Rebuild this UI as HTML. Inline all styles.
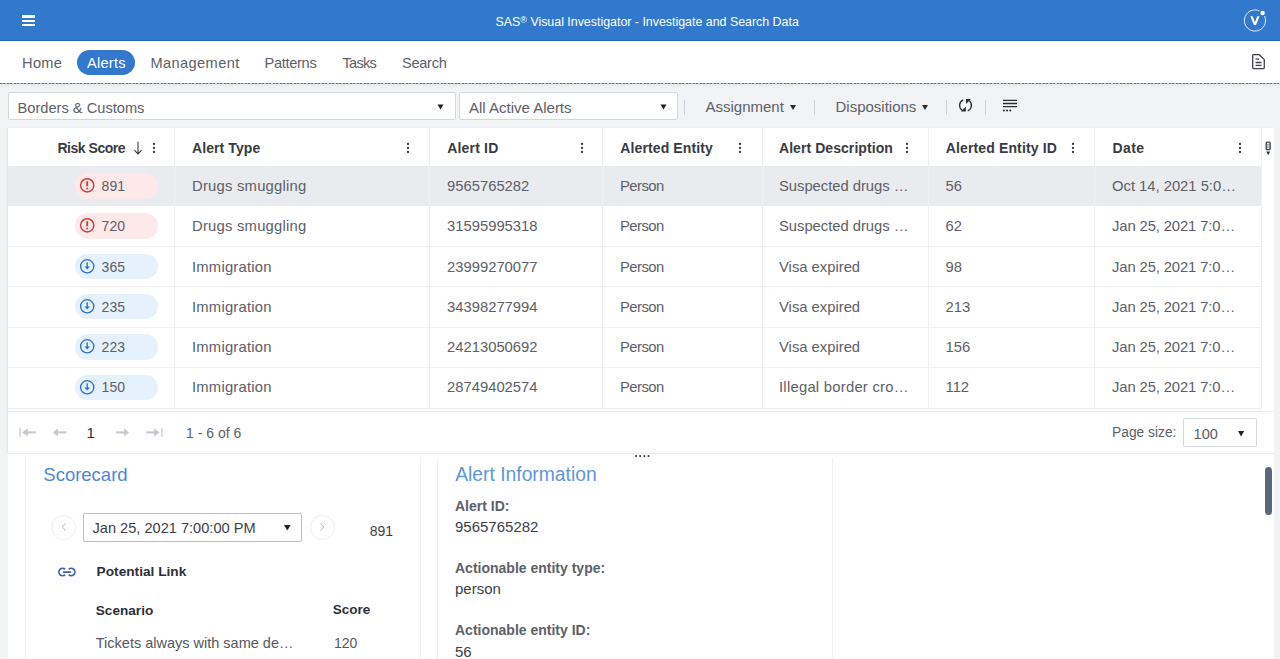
<!DOCTYPE html>
<html><head><meta charset="utf-8">
<style>
*{box-sizing:border-box;margin:0;padding:0}
html,body{width:1280px;height:659px;overflow:hidden;background:#f2f3f5;font-family:"Liberation Sans",sans-serif;color:#5d6066}
.t{position:absolute;white-space:nowrap;line-height:1}
.b{position:absolute}
.s{position:absolute;overflow:visible}
.bold{font-weight:bold}
</style></head><body>
<div class="b" style="left:0;top:0;width:1280px;height:41px;background:#3279ce"></div>
<div class="b" style="left:0;top:40px;width:1280px;height:1.5px;background:#1f66c1"></div>
<div class="b" style="left:22px;top:15.3px;width:13px;height:2.4px;background:#fff"></div>
<div class="b" style="left:22px;top:19.6px;width:13px;height:2.4px;background:#fff"></div>
<div class="b" style="left:22px;top:23.9px;width:13px;height:2.4px;background:#fff"></div>
<div class="t " style="left:495.5px;top:16.00px;font-size:12.4px;color:#fff">SAS<span style="font-size:9px;vertical-align:3px">®</span> Visual Investigator - Investigate and Search Data</div>
<svg class="s" style="left:1240px;top:5px" width="32" height="32" viewBox="0 0 32 32">
<path d="M19.48 5.89 A10.6 10.6 0 1 0 24.61 11.02" fill="none" stroke="#e3ecf8" stroke-width="1"/>
<circle cx="22.6" cy="8" r="2.2" fill="#fff"/>
<path d="M10.3 11.2 H12.7 L14.95 17.2 L17.2 11.2 H19.6 L16.0 19.9 H13.9 Z" fill="#fff"/>
</svg>
<div class="b" style="left:0;top:41px;width:1280px;height:42px;background:#fff"></div>
<div class="b" style="left:0;top:84px;width:1280px;height:5px;background:linear-gradient(rgba(0,0,0,0.045),rgba(0,0,0,0))"></div>
<div class="b" style="left:0;top:83px;width:1280px;height:1px;background:repeating-linear-gradient(90deg,#54779f 0,#54779f 2px,rgba(84,119,170,0.45) 2px,rgba(84,119,170,0.45) 3.5px)"></div>
<div class="b" style="left:77px;top:50px;width:58px;height:25px;border-radius:12.5px;background:#3279ce"></div>
<div class="t " style="left:22px;top:56.00px;font-size:14.6px;letter-spacing:0.352px;color:#5d6066">Home</div>
<div class="t " style="left:87px;top:56.00px;font-size:14.6px;letter-spacing:0.239px;color:#fff">Alerts</div>
<div class="t " style="left:150.5px;top:56.00px;font-size:14.6px;letter-spacing:0.391px;color:#5d6066">Management</div>
<div class="t " style="left:264.5px;top:56.00px;font-size:14.6px;letter-spacing:-0.305px;color:#5d6066">Patterns</div>
<div class="t " style="left:342.5px;top:56.00px;font-size:14.6px;letter-spacing:-0.763px;color:#5d6066">Tasks</div>
<div class="t " style="left:402px;top:56.00px;font-size:14.6px;letter-spacing:-0.299px;color:#5d6066">Search</div>
<svg class="s" style="left:1250px;top:52px" width="18" height="19" viewBox="0 0 18 19">
<path d="M3 2.7 H9.3 L14.3 7.6 V15.6 Q14.3 16.6 13.3 16.6 H3.6 Q2.7 16.6 2.7 15.6 V3.6 Q2.7 2.7 3.6 2.7 Z" fill="none" stroke="#3d4048" stroke-width="1.3" stroke-linejoin="round"/>
<path d="M5.6 7.2 H9 M5.6 10.5 H11.5 M5.6 13.3 H11.5" stroke="#3d4048" stroke-width="1.3"/>
</svg>
<div class="b" style="left:8px;top:92px;width:447.5px;height:28px;background:#fff;border:1px solid #d3d6db;border-radius:2px"></div>
<div class="t " style="left:17.5px;top:101.01px;font-size:14.65px;">Borders &amp; Customs</div>
<svg class="s" style="left:437px;top:104px" width="7" height="6" viewBox="0 0 7 6"><path d="M0.5 0.5 H6.5 L3.5 5.5 Z" fill="#222"/></svg>
<div class="b" style="left:459px;top:92px;width:219px;height:28px;background:#fff;border:1px solid #d3d6db;border-radius:2px"></div>
<div class="t " style="left:469px;top:100.01px;font-size:15px;">All Active Alerts</div>
<svg class="s" style="left:660px;top:104px" width="7" height="6" viewBox="0 0 7 6"><path d="M0.5 0.5 H6.5 L3.5 5.5 Z" fill="#222"/></svg>
<div class="b" style="left:684px;top:100px;width:1px;height:15px;background:#cdd0d5"></div>
<div class="b" style="left:814px;top:100px;width:1px;height:15px;background:#cdd0d5"></div>
<div class="b" style="left:946px;top:100px;width:1px;height:15px;background:#cdd0d5"></div>
<div class="b" style="left:985px;top:100px;width:1px;height:15px;background:#cdd0d5"></div>
<div class="t " style="left:705.5px;top:99.00px;font-size:15px;">Assignment</div>
<svg class="s" style="left:790px;top:105px" width="6" height="5" viewBox="0 0 6 5"><path d="M0 0 H6 L3 5 Z" fill="#2a2c31"/></svg>
<div class="t " style="left:835.5px;top:99.00px;font-size:15px;">Dispositions</div>
<svg class="s" style="left:922px;top:105px" width="6" height="5" viewBox="0 0 6 5"><path d="M0 0 H6 L3 5 Z" fill="#2a2c31"/></svg>
<svg class="s" style="left:954px;top:95px" width="24" height="21" viewBox="0 0 24 21">
<path d="M9.3 4.8 A5.9 5.9 0 0 0 8.1 15.1" fill="none" stroke="#2a2c33" stroke-width="1.3"/>
<path d="M6.8 16.6 H11.8 V11.8 Z" fill="#2a2c33"/>
<path d="M14.9 5.5 A5.9 5.9 0 0 1 13.7 15.8" fill="none" stroke="#2a2c33" stroke-width="1.3"/>
<path d="M12 4 H16.8 L12 8.9 Z" fill="#2a2c33"/>
</svg>
<svg class="s" style="left:1002px;top:98px" width="17" height="15" viewBox="0 0 17 15">
<path d="M1 2.4 H15 M1 5.5 H15 M1 8.7 H15" stroke="#2a2c33" stroke-width="1.3"/>
<circle cx="1.9" cy="12.5" r="1" fill="#2a2c33"/><circle cx="5.1" cy="12.5" r="1" fill="#2a2c33"/><circle cx="8.3" cy="12.5" r="1" fill="#2a2c33"/>
</svg>
<div class="b" style="left:8px;top:128px;width:1266px;height:325px;background:#fff;box-shadow:-1px 0 1.5px rgba(0,0,0,0.07)"></div>
<div class="b" style="left:8px;top:166px;width:1253px;height:40.3px;background:#eaebef"></div>
<div class="b" style="left:8px;top:165.5px;width:1253px;height:1px;background:#e9ebee"></div>
<div class="b" style="left:8px;top:246.10px;width:1253px;height:1px;background:#eef0f2"></div>
<div class="b" style="left:8px;top:286.40px;width:1253px;height:1px;background:#eef0f2"></div>
<div class="b" style="left:8px;top:326.70px;width:1253px;height:1px;background:#eef0f2"></div>
<div class="b" style="left:8px;top:367.00px;width:1253px;height:1px;background:#eef0f2"></div>
<div class="b" style="left:8px;top:408px;width:1253px;height:1px;background:#eaecef"></div>
<div class="b" style="left:174px;top:128px;width:1px;height:280.5px;background:#eef0f2"></div>
<div class="b" style="left:429px;top:128px;width:1px;height:280.5px;background:#eef0f2"></div>
<div class="b" style="left:602px;top:128px;width:1px;height:280.5px;background:#eef0f2"></div>
<div class="b" style="left:762px;top:128px;width:1px;height:280.5px;background:#eef0f2"></div>
<div class="b" style="left:928px;top:128px;width:1px;height:280.5px;background:#eef0f2"></div>
<div class="b" style="left:1094px;top:128px;width:1px;height:280.5px;background:#eef0f2"></div>
<div class="b" style="left:1261px;top:128px;width:1px;height:280.5px;background:#eef0f2"></div>
<div class="t bold" style="left:57.5px;top:141.00px;font-size:14px;letter-spacing:-0.487px;color:#383b42">Risk Score</div>
<svg class="s" style="left:133px;top:140px" width="10" height="16" viewBox="0 0 10 16"><path d="M5 1.8 V14 M1.4 10.2 L5 14 L8.6 10.2" fill="none" stroke="#383b42" stroke-width="1.1"/></svg>
<svg class="s" style="left:150.6px;top:141.3px" width="6" height="14" viewBox="0 0 6 14"><circle cx="3" cy="3" r="1.15" fill="#3a3c42"/><circle cx="3" cy="7" r="1.15" fill="#3a3c42"/><circle cx="3" cy="11" r="1.15" fill="#3a3c42"/></svg>
<div class="t bold" style="left:192px;top:141.01px;font-size:14px;letter-spacing:0.088px;color:#383b42">Alert Type</div>
<svg class="s" style="left:405.1px;top:141.3px" width="6" height="14" viewBox="0 0 6 14"><circle cx="3" cy="3" r="1.15" fill="#3a3c42"/><circle cx="3" cy="7" r="1.15" fill="#3a3c42"/><circle cx="3" cy="11" r="1.15" fill="#3a3c42"/></svg>
<div class="t bold" style="left:447.2px;top:141.01px;font-size:14px;letter-spacing:0.185px;color:#383b42">Alert ID</div>
<svg class="s" style="left:578.7px;top:141.3px" width="6" height="14" viewBox="0 0 6 14"><circle cx="3" cy="3" r="1.15" fill="#3a3c42"/><circle cx="3" cy="7" r="1.15" fill="#3a3c42"/><circle cx="3" cy="11" r="1.15" fill="#3a3c42"/></svg>
<div class="t bold" style="left:620.3px;top:141.01px;font-size:14px;letter-spacing:0.115px;color:#383b42">Alerted Entity</div>
<svg class="s" style="left:737.3px;top:141.3px" width="6" height="14" viewBox="0 0 6 14"><circle cx="3" cy="3" r="1.15" fill="#3a3c42"/><circle cx="3" cy="7" r="1.15" fill="#3a3c42"/><circle cx="3" cy="11" r="1.15" fill="#3a3c42"/></svg>
<div class="t bold" style="left:779px;top:141.01px;font-size:14px;letter-spacing:0.062px;color:#383b42">Alert Description</div>
<svg class="s" style="left:904px;top:141.3px" width="6" height="14" viewBox="0 0 6 14"><circle cx="3" cy="3" r="1.15" fill="#3a3c42"/><circle cx="3" cy="7" r="1.15" fill="#3a3c42"/><circle cx="3" cy="11" r="1.15" fill="#3a3c42"/></svg>
<div class="t bold" style="left:945.8px;top:141.01px;font-size:14px;letter-spacing:0.130px;color:#383b42">Alerted Entity ID</div>
<svg class="s" style="left:1070.2px;top:141.3px" width="6" height="14" viewBox="0 0 6 14"><circle cx="3" cy="3" r="1.15" fill="#3a3c42"/><circle cx="3" cy="7" r="1.15" fill="#3a3c42"/><circle cx="3" cy="11" r="1.15" fill="#3a3c42"/></svg>
<div class="t bold" style="left:1112.5px;top:141.01px;font-size:14px;letter-spacing:0.385px;color:#383b42">Date</div>
<svg class="s" style="left:1237.3px;top:141.3px" width="6" height="14" viewBox="0 0 6 14"><circle cx="3" cy="3" r="1.15" fill="#3a3c42"/><circle cx="3" cy="7" r="1.15" fill="#3a3c42"/><circle cx="3" cy="11" r="1.15" fill="#3a3c42"/></svg>
<svg class="s" style="left:1262px;top:138px" width="12" height="20" viewBox="0 0 12 20">
<rect x="4.2" y="4.2" width="3.9" height="7.4" rx="0.9" fill="none" stroke="#3a3c42" stroke-width="1.3"/>
<path d="M5 6.3 H7.3 M5 8 H7.3 M5 9.7 H7.3" stroke="#6a6d73" stroke-width="0.8"/>
<path d="M4.3 13.4 H8.1 L6.2 17.3 Z" fill="#2a2c31"/>
</svg>
<div class="b" style="left:75px;top:173.00px;width:83px;height:25.5px;border-radius:13px;background:#fde9ea"></div>
<svg class="s" style="left:79px;top:177.00px" width="16" height="16" viewBox="0 0 16 16">
<circle cx="8.2" cy="8.3" r="6.6" fill="none" stroke="#d13a38" stroke-width="1.45"/>
<path d="M8.2 4.3 V9.3" stroke="#d13a38" stroke-width="1.9"/><circle cx="8.2" cy="11.6" r="1" fill="#d13a38"/>
</svg>
<div class="t " style="left:101.6px;top:179.01px;font-size:14px;">891</div>
<div class="t " style="left:192px;top:179.00px;font-size:14.8px;letter-spacing:0.229px;">Drugs smuggling</div>
<div class="t " style="left:447px;top:179.00px;font-size:14.8px;">9565765282</div>
<div class="t " style="left:620px;top:179.00px;font-size:14.8px;letter-spacing:-0.536px;">Person</div>
<div class="t " style="left:779px;top:179.00px;font-size:14.8px;letter-spacing:-0.030px;">Suspected drugs …</div>
<div class="t " style="left:945.5px;top:179.00px;font-size:14.8px;">56</div>
<div class="t " style="left:1112px;top:179.00px;font-size:14.8px;letter-spacing:-0.015px;">Oct 14, 2021 5:0…</div>
<div class="b" style="left:75px;top:213.30px;width:83px;height:25.5px;border-radius:13px;background:#fde9ea"></div>
<svg class="s" style="left:79px;top:217.30px" width="16" height="16" viewBox="0 0 16 16">
<circle cx="8.2" cy="8.3" r="6.6" fill="none" stroke="#d13a38" stroke-width="1.45"/>
<path d="M8.2 4.3 V9.3" stroke="#d13a38" stroke-width="1.9"/><circle cx="8.2" cy="11.6" r="1" fill="#d13a38"/>
</svg>
<div class="t " style="left:101.6px;top:219.01px;font-size:14px;">720</div>
<div class="t " style="left:192px;top:219.01px;font-size:14.8px;letter-spacing:0.229px;">Drugs smuggling</div>
<div class="t " style="left:447px;top:219.01px;font-size:14.8px;">31595995318</div>
<div class="t " style="left:620px;top:219.01px;font-size:14.8px;letter-spacing:-0.536px;">Person</div>
<div class="t " style="left:779px;top:219.01px;font-size:14.8px;letter-spacing:-0.030px;">Suspected drugs …</div>
<div class="t " style="left:945.5px;top:219.01px;font-size:14.8px;">62</div>
<div class="t " style="left:1112px;top:219.01px;font-size:14.8px;letter-spacing:-0.113px;">Jan 25, 2021 7:0…</div>
<div class="b" style="left:75px;top:253.60px;width:83px;height:25.5px;border-radius:13px;background:#e5f1fd"></div>
<svg class="s" style="left:79px;top:257.60px" width="16" height="16" viewBox="0 0 16 16">
<circle cx="8.2" cy="8.3" r="6.6" fill="none" stroke="#2b6fc6" stroke-width="1.3"/>
<path d="M8.2 4.2 V9.2" stroke="#2b6fc6" stroke-width="1.3"/><path d="M5.5 8.4 H10.9 L8.2 11.4 Z" fill="#2b6fc6"/>
</svg>
<div class="t " style="left:101.6px;top:260.00px;font-size:14px;">365</div>
<div class="t " style="left:192px;top:260.01px;font-size:14.8px;letter-spacing:0.217px;">Immigration</div>
<div class="t " style="left:447px;top:260.01px;font-size:14.8px;">23999270077</div>
<div class="t " style="left:620px;top:260.01px;font-size:14.8px;letter-spacing:-0.536px;">Person</div>
<div class="t " style="left:779px;top:260.01px;font-size:14.8px;letter-spacing:-0.007px;">Visa expired</div>
<div class="t " style="left:945.5px;top:260.01px;font-size:14.8px;">98</div>
<div class="t " style="left:1112px;top:260.01px;font-size:14.8px;letter-spacing:-0.113px;">Jan 25, 2021 7:0…</div>
<div class="b" style="left:75px;top:293.90px;width:83px;height:25.5px;border-radius:13px;background:#e5f1fd"></div>
<svg class="s" style="left:79px;top:297.90px" width="16" height="16" viewBox="0 0 16 16">
<circle cx="8.2" cy="8.3" r="6.6" fill="none" stroke="#2b6fc6" stroke-width="1.3"/>
<path d="M8.2 4.2 V9.2" stroke="#2b6fc6" stroke-width="1.3"/><path d="M5.5 8.4 H10.9 L8.2 11.4 Z" fill="#2b6fc6"/>
</svg>
<div class="t " style="left:101.6px;top:300.00px;font-size:14px;">235</div>
<div class="t " style="left:192px;top:300.01px;font-size:14.8px;letter-spacing:0.217px;">Immigration</div>
<div class="t " style="left:447px;top:300.01px;font-size:14.8px;">34398277994</div>
<div class="t " style="left:620px;top:300.01px;font-size:14.8px;letter-spacing:-0.536px;">Person</div>
<div class="t " style="left:779px;top:300.01px;font-size:14.8px;letter-spacing:-0.007px;">Visa expired</div>
<div class="t " style="left:945.5px;top:300.01px;font-size:14.8px;">213</div>
<div class="t " style="left:1112px;top:300.01px;font-size:14.8px;letter-spacing:-0.113px;">Jan 25, 2021 7:0…</div>
<div class="b" style="left:75px;top:334.20px;width:83px;height:25.5px;border-radius:13px;background:#e5f1fd"></div>
<svg class="s" style="left:79px;top:338.20px" width="16" height="16" viewBox="0 0 16 16">
<circle cx="8.2" cy="8.3" r="6.6" fill="none" stroke="#2b6fc6" stroke-width="1.3"/>
<path d="M8.2 4.2 V9.2" stroke="#2b6fc6" stroke-width="1.3"/><path d="M5.5 8.4 H10.9 L8.2 11.4 Z" fill="#2b6fc6"/>
</svg>
<div class="t " style="left:101.6px;top:340.01px;font-size:14px;">223</div>
<div class="t " style="left:192px;top:340.00px;font-size:14.8px;letter-spacing:0.217px;">Immigration</div>
<div class="t " style="left:447px;top:340.00px;font-size:14.8px;">24213050692</div>
<div class="t " style="left:620px;top:340.00px;font-size:14.8px;letter-spacing:-0.536px;">Person</div>
<div class="t " style="left:779px;top:340.00px;font-size:14.8px;letter-spacing:-0.007px;">Visa expired</div>
<div class="t " style="left:945.5px;top:340.00px;font-size:14.8px;">156</div>
<div class="t " style="left:1112px;top:340.00px;font-size:14.8px;letter-spacing:-0.113px;">Jan 25, 2021 7:0…</div>
<div class="b" style="left:75px;top:374.50px;width:83px;height:25.5px;border-radius:13px;background:#e5f1fd"></div>
<svg class="s" style="left:79px;top:378.50px" width="16" height="16" viewBox="0 0 16 16">
<circle cx="8.2" cy="8.3" r="6.6" fill="none" stroke="#2b6fc6" stroke-width="1.3"/>
<path d="M8.2 4.2 V9.2" stroke="#2b6fc6" stroke-width="1.3"/><path d="M5.5 8.4 H10.9 L8.2 11.4 Z" fill="#2b6fc6"/>
</svg>
<div class="t " style="left:101.6px;top:380.01px;font-size:14px;">150</div>
<div class="t " style="left:192px;top:380.00px;font-size:14.8px;letter-spacing:0.217px;">Immigration</div>
<div class="t " style="left:447px;top:380.00px;font-size:14.8px;">28749402574</div>
<div class="t " style="left:620px;top:380.00px;font-size:14.8px;letter-spacing:-0.536px;">Person</div>
<div class="t " style="left:779px;top:380.00px;font-size:14.8px;letter-spacing:0.249px;">Illegal border cro…</div>
<div class="t " style="left:945.5px;top:380.00px;font-size:14.8px;">112</div>
<div class="t " style="left:1112px;top:380.00px;font-size:14.8px;letter-spacing:-0.113px;">Jan 25, 2021 7:0…</div>
<div class="b" style="left:8px;top:411px;width:1266px;height:1px;background:#eceef1"></div>
<svg class="s" style="left:0;top:420px" width="180" height="25" viewBox="0 0 180 25">
<rect x="19.2" y="8" width="1.8" height="8.9" fill="#d8dadf"/>
<path d="M22.2 12.4 L27.8 8.3 V16.6 Z" fill="#c5c8ce"/><rect x="27" y="11.35" width="8.8" height="2.1" fill="#c5c8ce"/>
<path d="M52.9 12.4 L57.8 8.3 V16.6 Z" fill="#c5c8ce"/><rect x="57" y="11.35" width="9.3" height="2.1" fill="#c5c8ce"/>
<rect x="115.9" y="11.35" width="8.9" height="2.1" fill="#c5c8ce"/><path d="M129 12.4 L124.1 8.3 V16.6 Z" fill="#c5c8ce"/>
<rect x="146.1" y="11.35" width="8.8" height="2.1" fill="#c5c8ce"/><path d="M159.5 12.4 L154.1 8.3 V16.6 Z" fill="#c5c8ce"/>
<rect x="161" y="8" width="1.8" height="8.9" fill="#d8dadf"/>
</svg>
<div class="t " style="left:86.5px;top:425.01px;font-size:15px;color:#2d3037">1</div>
<div class="t " style="left:186px;top:426.01px;font-size:14px;">1 - 6 of 6</div>
<div class="t " style="left:1112px;top:426.00px;font-size:13.8px;">Page size:</div>
<div class="b" style="left:1183px;top:418px;width:73.5px;height:28.5px;background:#fff;border:1px solid #d3d6db;border-radius:2px"></div>
<div class="t " style="left:1193.6px;top:427.00px;font-size:14.5px;">100</div>
<svg class="s" style="left:1238px;top:430.5px" width="7" height="6" viewBox="0 0 7 6"><path d="M0 0 H6.2 L3.1 5.4 Z" fill="#222"/></svg>
<div class="b" style="left:8px;top:453.5px;width:1266px;height:206px;background:#fff"></div>
<div class="b" style="left:8px;top:453px;width:1266px;height:1px;background:#eceef1"></div>
<div class="b" style="left:25px;top:458px;width:1px;height:201px;background:#f0f1f3"></div>
<div class="b" style="left:420px;top:458px;width:1px;height:201px;background:#f0f1f3"></div>
<div class="b" style="left:437px;top:458px;width:1px;height:201px;background:#f0f1f3"></div>
<div class="b" style="left:832px;top:458px;width:1px;height:201px;background:#f0f1f3"></div>
<svg class="s" style="left:632px;top:452px" width="20" height="8" viewBox="0 0 20 8"><circle cx="4" cy="4.1" r="1.05" fill="#3f4249"/><circle cx="8.2" cy="4.1" r="1.05" fill="#3f4249"/><circle cx="12.4" cy="4.1" r="1.05" fill="#3f4249"/><circle cx="16.5" cy="4.1" r="1.05" fill="#3f4249"/></svg>
<div class="b" style="left:1265px;top:466.5px;width:7px;height:48px;border-radius:3.5px;background:#5d6679"></div>
<div class="b" style="left:1274px;top:128px;width:6px;height:531px;background:#f2f3f5"></div>
<div class="t " style="left:43.3px;top:466.01px;font-size:18.5px;color:#4d88d2">Scorecard</div>
<div class="b" style="left:51px;top:514.5px;width:25px;height:25px;border-radius:50%;border:1px solid #eceef1"></div>
<svg class="s" style="left:58px;top:521px" width="12" height="12" viewBox="0 0 12 12"><path d="M7.5 2.4 L4.3 6 L7.5 9.6" fill="none" stroke="#a9b8d0" stroke-width="1"/></svg>
<div class="b" style="left:83px;top:513px;width:219px;height:28.5px;background:#fff;border:1px solid #b9bec7;border-radius:2px"></div>
<div class="t " style="left:92.5px;top:521.01px;font-size:14.6px;color:#3d4047">Jan 25, 2021 7:00:00 PM</div>
<svg class="s" style="left:284px;top:525.3px" width="7" height="6" viewBox="0 0 7 6"><path d="M0 0 H6.6 L3.3 5.5 Z" fill="#222"/></svg>
<div class="b" style="left:310px;top:514.5px;width:25px;height:25px;border-radius:50%;border:1px solid #eceef1"></div>
<svg class="s" style="left:316px;top:521px" width="12" height="12" viewBox="0 0 12 12"><path d="M4.5 2.4 L7.7 6 L4.5 9.6" fill="none" stroke="#a9b8d0" stroke-width="1"/></svg>
<div class="t " style="left:369.7px;top:524.01px;font-size:14px;color:#3d4047">891</div>
<svg class="s" style="left:52px;top:562px" width="30" height="20" viewBox="0 0 30 20">
<path d="M13.05 7.45 A3.6 3.6 0 1 0 13.05 12.55 M16.75 7.45 A3.6 3.6 0 1 1 16.75 12.55" fill="none" stroke="#3c5eab" stroke-width="1.7"/>
<path d="M11.6 10.1 H18.3" stroke="#3c5eab" stroke-width="1.8" stroke-linecap="round"/>
</svg>
<div class="t bold" style="left:96.6px;top:565.01px;font-size:13.7px;color:#2d3037">Potential Link</div>
<div class="t bold" style="left:95.8px;top:604.00px;font-size:13.6px;color:#2d3037">Scenario</div>
<div class="t bold" style="left:332.8px;top:603.01px;font-size:13.5px;color:#2d3037">Score</div>
<div class="t " style="left:95.8px;top:636.01px;font-size:14.5px;color:#55585e">Tickets always with same de…</div>
<div class="t " style="left:334px;top:636.01px;font-size:14px;color:#55585e">120</div>
<div class="t " style="left:455.2px;top:465.01px;font-size:19.3px;color:#6197d8">Alert Information</div>
<div class="t bold" style="left:455px;top:499.00px;font-size:14px;color:#5e6168">Alert ID:</div>
<div class="t " style="left:455px;top:519.00px;font-size:15px;color:#3d4047">9565765282</div>
<div class="t bold" style="left:455px;top:561.00px;font-size:14px;color:#5e6168">Actionable entity type:</div>
<div class="t " style="left:455px;top:581.01px;font-size:15px;color:#3d4047">person</div>
<div class="t bold" style="left:455px;top:623.01px;font-size:14px;color:#5e6168">Actionable entity ID:</div>
<div class="t " style="left:455px;top:644.01px;font-size:15px;color:#3d4047">56</div>
</body></html>
